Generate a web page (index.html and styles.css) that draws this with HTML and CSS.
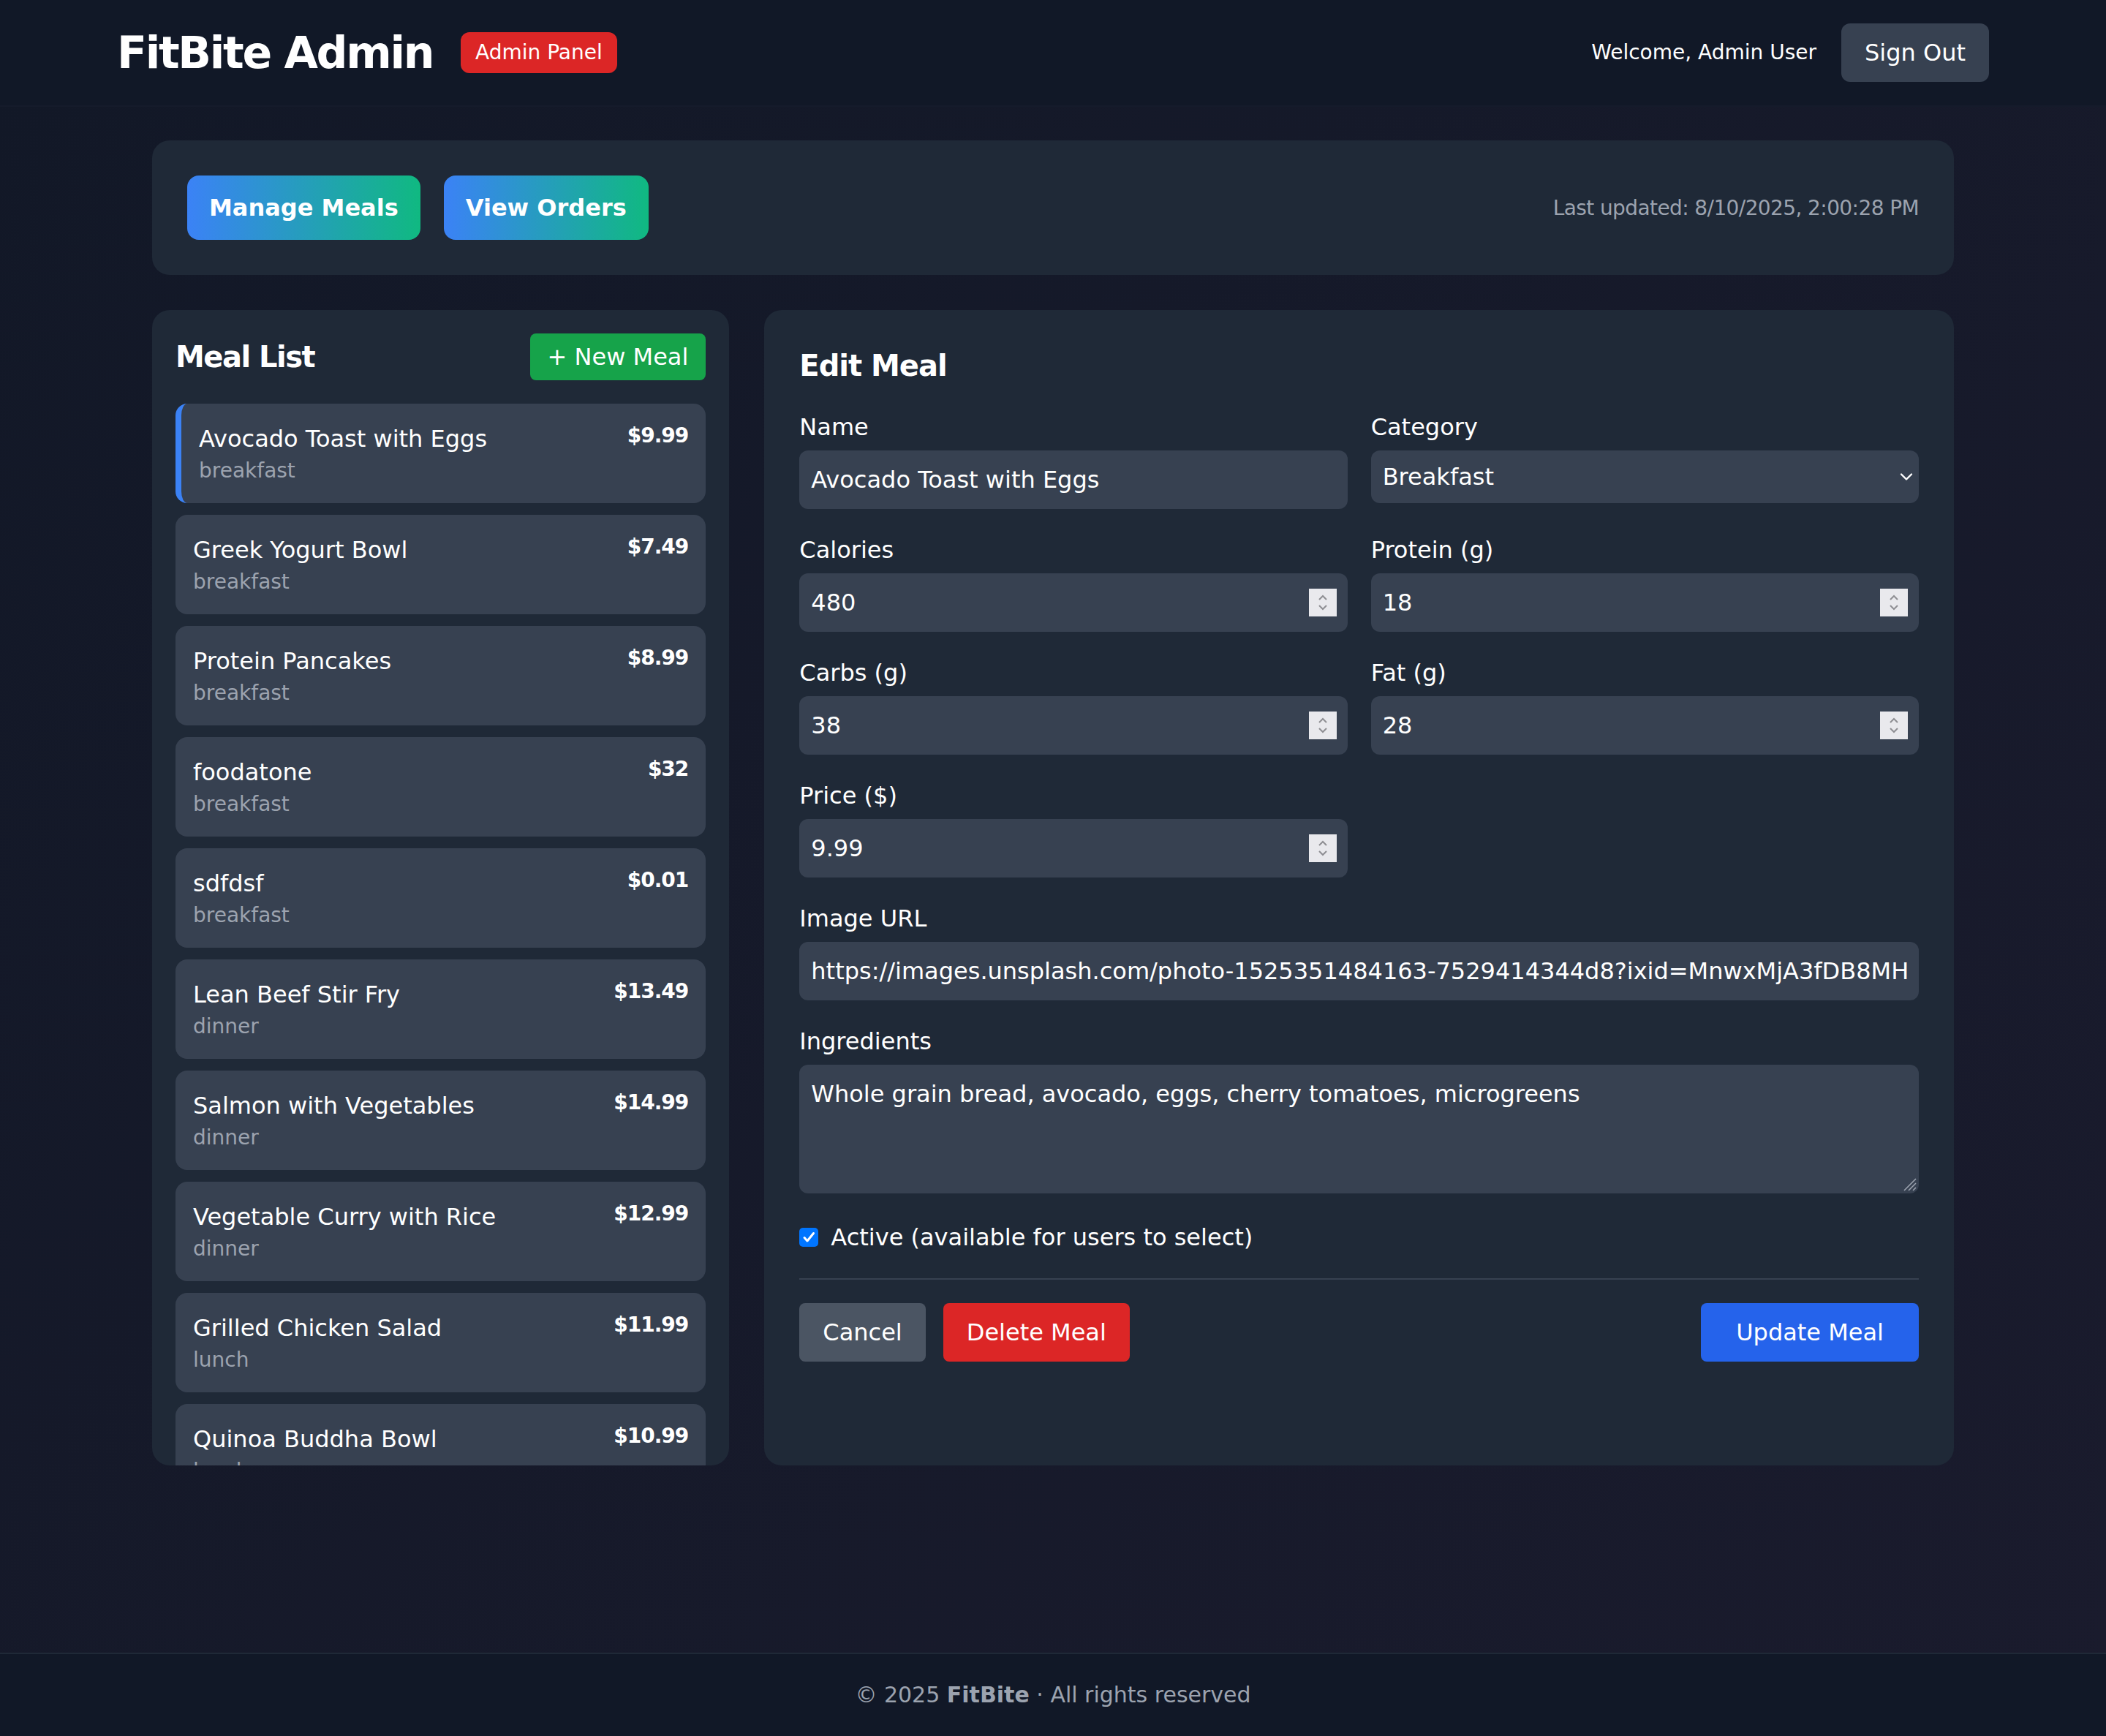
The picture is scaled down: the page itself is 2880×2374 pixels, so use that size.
FILE: index.html
```html
<!DOCTYPE html>
<html lang="en">
<head>
<meta charset="utf-8">
<title>FitBite Admin</title>
<link rel="stylesheet" href="styles.css">
</head>
<body>
<header class="topbar">
  <div class="topbar-inner">
    <div class="brand">
      <h1 class="brand-title">FitBite Admin</h1>
      <span class="badge">Admin Panel</span>
    </div>
    <div class="user">
      <span class="welcome">Welcome, Admin User</span>
      <button class="btn-signout" type="button">Sign Out</button>
    </div>
  </div>
</header>

<main class="main">
  <div class="container">
    <section class="navcard">
      <div class="tabs">
        <button class="tab" type="button">Manage Meals</button>
        <button class="tab" type="button">View Orders</button>
      </div>
      <span class="updated">Last updated: 8/10/2025, 2:00:28 PM</span>
    </section>

    <div class="columns">
      <section class="card list-card">
        <div class="list-head">
          <h2 class="list-title">Meal List</h2>
          <button class="btn-new" type="button">+ New Meal</button>
        </div>
        <ul class="meal-list">
          <li class="meal active"><div><div class="meal-name">Avocado Toast with Eggs</div><div class="meal-cat">breakfast</div></div><span class="meal-price">$9.99</span></li>
          <li class="meal"><div><div class="meal-name">Greek Yogurt Bowl</div><div class="meal-cat">breakfast</div></div><span class="meal-price">$7.49</span></li>
          <li class="meal"><div><div class="meal-name">Protein Pancakes</div><div class="meal-cat">breakfast</div></div><span class="meal-price">$8.99</span></li>
          <li class="meal"><div><div class="meal-name">foodatone</div><div class="meal-cat">breakfast</div></div><span class="meal-price">$32</span></li>
          <li class="meal"><div><div class="meal-name">sdfdsf</div><div class="meal-cat">breakfast</div></div><span class="meal-price">$0.01</span></li>
          <li class="meal"><div><div class="meal-name">Lean Beef Stir Fry</div><div class="meal-cat">dinner</div></div><span class="meal-price">$13.49</span></li>
          <li class="meal"><div><div class="meal-name">Salmon with Vegetables</div><div class="meal-cat">dinner</div></div><span class="meal-price">$14.99</span></li>
          <li class="meal"><div><div class="meal-name">Vegetable Curry with Rice</div><div class="meal-cat">dinner</div></div><span class="meal-price">$12.99</span></li>
          <li class="meal"><div><div class="meal-name">Grilled Chicken Salad</div><div class="meal-cat">lunch</div></div><span class="meal-price">$11.99</span></li>
          <li class="meal"><div><div class="meal-name">Quinoa Buddha Bowl</div><div class="meal-cat">lunch</div></div><span class="meal-price">$10.99</span></li>
        </ul>
      </section>

      <section class="card edit-card">
        <h2 class="edit-title">Edit Meal</h2>
        <form class="form">
          <div class="fields">
            <div class="field">
              <label class="label">Name</label>
              <input class="input" type="text" value="Avocado Toast with Eggs">
            </div>
            <div class="field">
              <label class="label">Category</label>
              <div class="select-wrap">
                <select class="input select">
                  <option selected>Breakfast</option>
                  <option>Lunch</option>
                  <option>Dinner</option>
                </select>
                <svg class="select-arrow" viewBox="0 0 18 12" aria-hidden="true"><path d="M2 2.5 L9 9.5 L16 2.5" fill="none" stroke="#ffffff" stroke-width="2.4" stroke-linecap="round" stroke-linejoin="round"/></svg>
              </div>
            </div>
            <div class="field">
              <label class="label">Calories</label>
              <div class="num-wrap">
                <input class="input num" type="number" value="480">
                <span class="spin"><svg viewBox="0 0 38 38" aria-hidden="true"><path d="M14 15 L19 10 L24 15" fill="none" stroke="#8e8e93" stroke-width="2"/><path d="M14 23 L19 28 L24 23" fill="none" stroke="#8e8e93" stroke-width="2"/></svg></span>
              </div>
            </div>
            <div class="field">
              <label class="label">Protein (g)</label>
              <div class="num-wrap">
                <input class="input num" type="number" value="18">
                <span class="spin"><svg viewBox="0 0 38 38" aria-hidden="true"><path d="M14 15 L19 10 L24 15" fill="none" stroke="#8e8e93" stroke-width="2"/><path d="M14 23 L19 28 L24 23" fill="none" stroke="#8e8e93" stroke-width="2"/></svg></span>
              </div>
            </div>
            <div class="field">
              <label class="label">Carbs (g)</label>
              <div class="num-wrap">
                <input class="input num" type="number" value="38">
                <span class="spin"><svg viewBox="0 0 38 38" aria-hidden="true"><path d="M14 15 L19 10 L24 15" fill="none" stroke="#8e8e93" stroke-width="2"/><path d="M14 23 L19 28 L24 23" fill="none" stroke="#8e8e93" stroke-width="2"/></svg></span>
              </div>
            </div>
            <div class="field">
              <label class="label">Fat (g)</label>
              <div class="num-wrap">
                <input class="input num" type="number" value="28">
                <span class="spin"><svg viewBox="0 0 38 38" aria-hidden="true"><path d="M14 15 L19 10 L24 15" fill="none" stroke="#8e8e93" stroke-width="2"/><path d="M14 23 L19 28 L24 23" fill="none" stroke="#8e8e93" stroke-width="2"/></svg></span>
              </div>
            </div>
            <div class="field">
              <label class="label">Price ($)</label>
              <div class="num-wrap">
                <input class="input num" type="number" value="9.99">
                <span class="spin"><svg viewBox="0 0 38 38" aria-hidden="true"><path d="M14 15 L19 10 L24 15" fill="none" stroke="#8e8e93" stroke-width="2"/><path d="M14 23 L19 28 L24 23" fill="none" stroke="#8e8e93" stroke-width="2"/></svg></span>
              </div>
            </div>
            <div class="field wide">
              <label class="label">Image URL</label>
              <input class="input" type="text" value="https://images.unsplash.com/photo-1525351484163-7529414344d8?ixid=MnwxMjA3fDB8MHxzZWFyY2h8MXx8YXZvY2FkbyUyMHRvYXN0fGVufDB8fDB8fA&amp;auto=format&amp;fit=crop&amp;w=500&amp;q=60">
            </div>
            <div class="field wide">
              <label class="label">Ingredients</label>
              <div class="ta-wrap">
                <textarea class="input textarea" rows="3">Whole grain bread, avocado, eggs, cherry tomatoes, microgreens</textarea>
                <svg class="grip" viewBox="0 0 24 24" aria-hidden="true"><path d="M22 6 L6 22 M22 12 L12 22 M22 18 L18 22" stroke="#9ca3af" stroke-width="1.6"/></svg>
              </div>
            </div>
          </div>

          <label class="check">
            <svg class="checkbox" viewBox="0 0 26 26" aria-hidden="true"><rect x="0" y="0" width="26" height="26" rx="5" fill="#0075ff"/><path d="M7 13.5 L11 18 L19.5 7.5" fill="none" stroke="#ffffff" stroke-width="3" stroke-linecap="round" stroke-linejoin="round"/></svg>
            <span>Active (available for users to select)</span>
          </label>

          <div class="actions">
            <div class="actions-left">
              <button class="btn btn-cancel" type="button">Cancel</button>
              <button class="btn btn-delete" type="button">Delete Meal</button>
            </div>
            <button class="btn btn-update" type="button">Update Meal</button>
          </div>
        </form>
      </section>
    </div>
  </div>
</main>

<footer class="footer">
  © 2025 <strong>FitBite</strong> · All rights reserved
</footer>
</body>
</html>
```

FILE: styles.css
```css
* {
  box-sizing: border-box;
  margin: 0;
  padding: 0;
}

body {
  min-height: 2374px;
  display: flex;
  flex-direction: column;
  font-family: "DejaVu Sans", "Liberation Sans", sans-serif;
  color: #ffffff;
  background: linear-gradient(135deg, #121827 0%, #1a1b2d 100%);
}

button,
input,
select,
textarea {
  font-family: inherit;
  color: inherit;
}

/* Header */
.topbar {
  background: #111827;
  border-bottom: 2px solid #151b2b;
  padding: 32px 0;
}

.topbar-inner {
  width: 2560px;
  height: 80px;
  margin: 0 auto;
  display: flex;
  align-items: center;
  justify-content: space-between;
}

.brand {
  display: flex;
  align-items: center;
}

.brand-title {
  font-size: 60px;
  line-height: 72px;
  font-weight: 700;
  letter-spacing: -2.3px;
}

.badge {
  margin-left: 38px;
  background: #dc2626;
  border-radius: 12px;
  font-size: 28px;
  line-height: 40px;
  padding: 8px 20px;
}

.user {
  display: flex;
  align-items: center;
  gap: 34px;
}

.welcome {
  font-size: 28px;
  line-height: 40px;
}

.btn-signout {
  height: 80px;
  padding: 0 32px;
  background: #374151;
  border: none;
  border-radius: 12px;
  font-size: 32px;
}

/* Main */
.main {
  flex: 1;
  padding-top: 46px;
}

.container {
  width: 2464px;
  margin: 0 auto;
}

.navcard {
  background: #1f2937;
  border-radius: 24px;
  padding: 48px;
  display: flex;
  align-items: center;
  justify-content: space-between;
  margin-bottom: 48px;
}

.tabs {
  display: flex;
  gap: 32px;
}

.tab {
  height: 88px;
  padding: 0 30px;
  border: none;
  border-radius: 16px;
  font-size: 32px;
  font-weight: 700;
  background: linear-gradient(90deg, #3b82f6 0%, #10b981 100%);
}

.updated {
  font-size: 28px;
  color: #9ca3af;
  letter-spacing: -0.6px;
}

.columns {
  display: grid;
  grid-template-columns: repeat(3, 1fr);
  gap: 48px;
  height: 1580px;
}

.card {
  background: #1f2937;
  border-radius: 24px;
  overflow: hidden;
}

/* Meal list */
.list-card {
  padding: 32px 32px 0;
}

.list-head {
  display: flex;
  align-items: center;
  justify-content: space-between;
  margin-bottom: 32px;
}

.list-title {
  font-size: 40px;
  line-height: 56px;
  font-weight: 700;
  letter-spacing: -1.5px;
}

.btn-new {
  height: 64px;
  padding: 0 24px;
  background: #16a34a;
  border: none;
  border-radius: 8px;
  font-size: 32px;
}

.meal-list {
  list-style: none;
  display: flex;
  flex-direction: column;
  gap: 16px;
}

.meal {
  height: 136px;
  flex: none;
  background: #374151;
  border-radius: 16px;
  padding: 24px;
  display: flex;
  align-items: flex-start;
  justify-content: space-between;
}

.meal.active {
  border-left: 8px solid #3b82f6;
}

.meal-name {
  font-size: 32px;
  line-height: 48px;
}

.meal-cat {
  font-size: 28px;
  line-height: 40px;
  color: #9ca3af;
}

.meal-price {
  font-size: 28px;
  line-height: 40px;
  font-weight: 700;
  letter-spacing: -1px;
}

/* Edit form */
.edit-card {
  grid-column: span 2;
  padding: 48px;
}

.edit-title {
  font-size: 40px;
  line-height: 56px;
  font-weight: 700;
  letter-spacing: -1px;
  margin-bottom: 36px;
}

.fields {
  display: grid;
  grid-template-columns: 1fr 1fr;
  column-gap: 32px;
  row-gap: 36px;
  align-items: start;
}

.field.wide {
  grid-column: span 2;
}

.label {
  display: block;
  font-size: 32px;
  line-height: 40px;
  margin-bottom: 12px;
}

.input {
  display: block;
  width: 100%;
  height: 80px;
  padding: 0 16px;
  background: #374151;
  border: none;
  border-radius: 12px;
  font-size: 32px;
  outline: none;
}

.select-wrap,
.num-wrap,
.ta-wrap {
  position: relative;
}

.select {
  height: 72px;
  appearance: none;
  -webkit-appearance: none;
}

.select-arrow {
  position: absolute;
  right: 8px;
  top: 30px;
  width: 18px;
  height: 12px;
}

.num::-webkit-inner-spin-button,
.num::-webkit-outer-spin-button {
  -webkit-appearance: none;
  margin: 0;
}

.spin {
  position: absolute;
  right: 15px;
  top: 21px;
  width: 38px;
  height: 38px;
  background: #e9e9ed;
  display: block;
}

.spin svg {
  display: block;
  width: 38px;
  height: 38px;
}

.textarea {
  height: 176px;
  padding: 16px;
  line-height: 48px;
  resize: none;
}

.grip {
  position: absolute;
  right: 2px;
  bottom: 2px;
  width: 24px;
  height: 24px;
}

.check {
  display: flex;
  align-items: center;
  gap: 17px;
  margin-top: 36px;
  font-size: 32px;
  line-height: 48px;
}

.checkbox {
  width: 26px;
  height: 26px;
  flex: none;
}

.actions {
  margin-top: 32px;
  padding-top: 32px;
  border-top: 2px solid #374151;
  display: flex;
  justify-content: space-between;
}

.actions-left {
  display: flex;
  gap: 24px;
}

.btn {
  height: 80px;
  padding: 0 32px;
  border: none;
  border-radius: 8px;
  font-size: 32px;
}

.btn-cancel {
  background: #4b5563;
}

.btn-delete {
  background: #dc2626;
}

.btn-update {
  background: #2563eb;
  padding: 0 48px;
}

/* Footer */
.footer {
  background: #111827;
  border-top: 2px solid #1f2937;
  padding: 32px;
  text-align: center;
  font-size: 30px;
  line-height: 48px;
  color: #9ca3af;
}

.footer strong {
  font-weight: 700;
}
```
